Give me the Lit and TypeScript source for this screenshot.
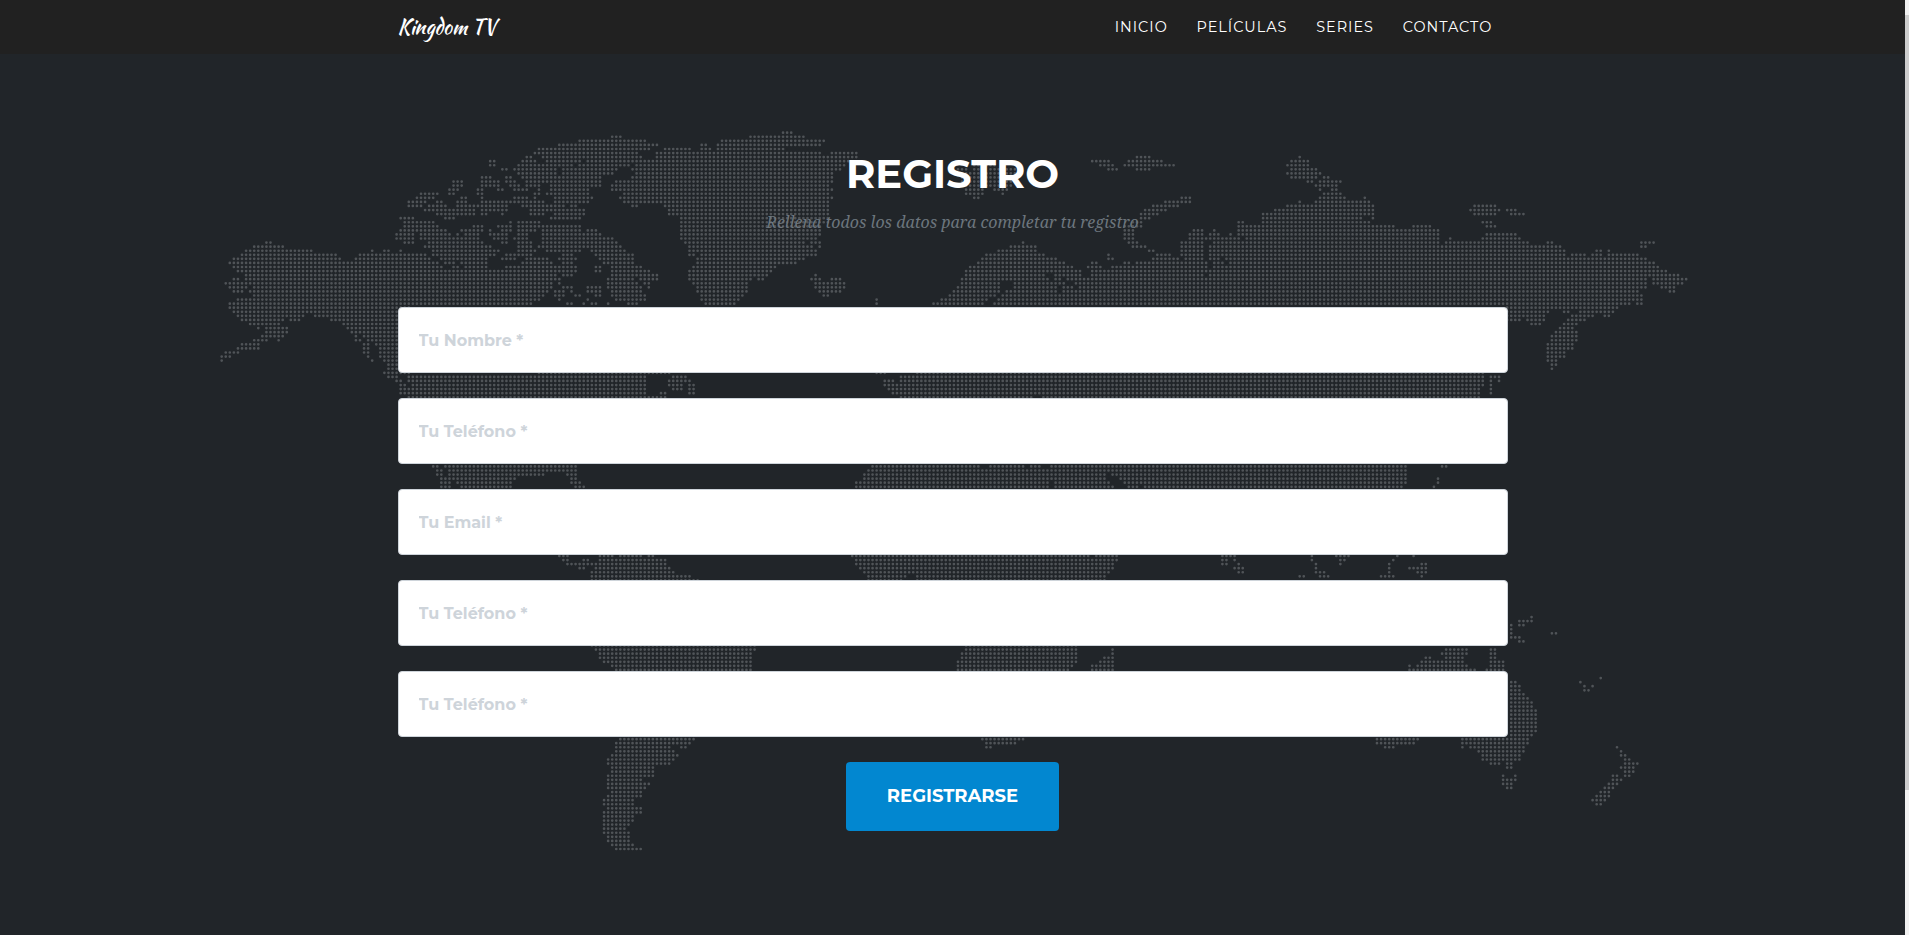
import { LitElement, html, css, svg } from "lit";
import { customElement, property } from "lit/decorators.js";

// Each sheet lists the horizontal runs of land for its rows of dots.
// x is the sheet's left edge, s the units per pixel of its run values.
interface Sheet {
  x: number;
  s: number;
  rows: string;
}

const PITCH = 4.068;
const ROW_PITCH = 4.07;
const LEFT = 217.6;
const TOP = 132.7;

const SHEETS: Sheet[] = [
  {
    x: 210,
    s: 3,
    rows: `1:1207-1231
2:1109-1305
3:1048-1342
4:987-1317
5:975-1280 1340-1440
6:950-963 1000-1290 1340-1440
7:938-980 1012-1109 1134-1317
8:840-852 926-1085 1109-1260
8:840
7:840-852
9:877-889 914-1036 1060-1220
10:926-1036 1060-1207
11:816-840 889-901 938-1036 1048-1170
12:730-755 816-865 889-914 950-1170
13:730-755 816-865 901-926 950-990 1024-1170
14:718-742 804-816 865-877 914-950 987 1024-1134
15:632-682 718-730 804-816 975-987 1012-1134
16:620-670 755-767 816 914-950 975-980 1036-1146
17:596-645 682-694 743-767 816-901 914-1005 1036-1134
18:596-633 657-706 743-804 816-890 938-1060 1085-1100
19:645-730 718-792 816-889 963-1121
20:682-694 706-767 779-792 816-828 877 963-1005 1036-1121
21:572-608 706-730 1024-1109
22:584-670 901 926-987
23:584-682 792-816 865-901 926-987 1000-1109
24:572-706 755-816 840 877-901 926-975 1000-1109 1134-1158
25:560-608 633-718 742 767-804 840-865 877-889 926-950 1000-1170
26:560-608 633-804 852-889 914-950 1000-1207
27:584-608 657-816 877-889 926-963 1000-1220 170-182
28:133-219 645-840 926-963 987-1230
29:109-304 487 523-535 572 670-865 926-975 1012-1109 1146-1245
30:97-377 450-462 475-645 670-853 889-914 926-963 1060-1085 1158-1268
31:72-390 438-657 694-828 877-914 950-1012 1048-1097 1170-1268
32:60-682 706-730 755-767 779-828 938-1024 1060-1085 1182-1268
33:72-694 730-742 767-828 889-1036 1048-1097 1158-1170 1207-1292
34:84-1036 1048-1097 1158-1170 1207-1317
35:109-1036 1060-1085 1207-1342
36:72-84 109-1048 1195-1268 1292-1342
37:48 60-109 121-1024 1048 1195-1280 1305-1317
38:60-109 133-1024 1060-1085 1134-1170 1195-1292 1317
39:72-97 121-1012 1036-1060 1085 1134-1170 1207-1292
40:133-1000 1036-1060 1097-1109 1158-1170 1207-1305
41:84-987 1048 1134 1220-1305
42:60-963 1073-1085 1121 1146-1158 1195 1256-1280
43:60-600
44:72-600
45:84-280 316-600
46:97-219 243-268 365-600
47:121-207 401-600
48:146 170-231 414-600
49:170-231 426-600
50:158-219 438 462-600
51:133-170 207 438-450 475-600
52:97-146 462-475 499-600
53:84-146 462-475 511-600
54:48-84 462-475 511-600
55:36-60 475 511-600
56:36 487 523-600
57:535-600
58:535-600
59:523-600`,
  },
  {
    x: 600,
    s: 3,
    rows: `0:548-573
1:36-61 450-610
2:0-134 365-670
3:0-170 304-316 353-658
4:0-146 194-268 304-328 353-548
5:0-110 170-658 694-768
6:0-110 170-768
7:121-744
8:110-732
9:97-719
10:110-694
11:97-690
12:48-690
13:36-683
14:36-694
15:73-683
16:61-694
17:73-683
18:97-110 194-683
19:207-683
20:207-683
21:243-683
22:243-683
23:243-658
24:243-658
25:243-658
26:243-646
27:256-610 633-658
28:268-633 658
29:268-646
30:268-285 304-646
31:292-610
32:292-585
33:280-525
34:268-512
35:268-500 646
36:268-450 475-487 633-658 694-719
37:280-438 646-732
38:292-438 646-732
39:292-438 658-719
40:304-426 670-682
41:304-414 829
42:316-402 829
8:1121-1134 1158-1180
9:1073-1097 1121-1146 1170-1256
10:1073-1256
11:1085-1243
12:1085-1231
13:1097-1231
14:1097-1146 1182-1219
15:1097-1146 1207
16:1121-1134
27:1268
28:1231-1305
29:1195-1305
30:1158-1330
31:1146-1366
32:1134-1390
33:1109-1415
34:1097-1440
35:1097-1330 1366-1440
36:1085-1342 1366-1378 1402-1440
37:1085-1195 1243-1342 1354-1390 1427-1440
38:1073-1195 1243-1366 1390-1415
39:1060-1195 1219-1366 1390-1440
40:1048-1182 1207-1440
41:1024-1158 1195-1440
42:1000-1146 1182-1440`,
  },
  {
    x: 1080,
    s: 2.529,
    rows: `6:144-176 556
7:30-72 123-207 536-577
8:51-82 113-237 525-577
9:72-93 144-176 536-598
10:525-608
11:536-598 618-628
12:577-587 608-658
13:598-648
14:608 638-648
15:618-658
16:257-278 608-670 720
17:216-278 556 598-730
18:185-247 525-741 998-1050
19:164-216 494-741 988-1060 1081-1101
20:154-195 463-741 998-1050 1091-1122
21:154-175 463-710 741
22:130-150 401-412 463-700 710-731 1019-1040
23:113-154 401-793 845-886 1029-1050
24:113-134 288-308 340 401-906
25:113-134 278-308 329-350 381 401-906 1029-1101
26:113-134 278-319 329-381 391-401 422-906 937 1019-1111
27:123-144 257-308 340-360 370-906 927-1132 1184-1194 1420-1451
28:134-165 257-308 329-1215 1420-1430
29:175-185 257-308 329-1225 1307-1317 1338
30:72 195-226 257-308 329-1225 1246-1276 1297-1317 1338-1410
31:72-82 185-247 267-308 329-350 370-1317 1328-1430
32:30-41 113-123 144-319 340-360 381-1451
33:20-51 82-319 340-1461
34:30-51 61-319 329-1481
35:30-308 329-1512
36:0-1430 1451-1532
37:0-1430 1451-1522
38:0-1430 1471-1502
39:0-1410 1492-1502
40:0-1420
41:0-1420
42:0-1390 1410-1420
43:1081-1360
44:1081-1184 1225-1235 1266-1350
45:1081-1174 1246-1297 1328-1338
46:1081-1111 1132-1174 1235-1276
47:1143-1163 1225-1256
48:1215-1246
49:1205-1256
50:1194-1256
51:1194-1256
52:1184-1246
53:1184-1246
54:1184-1225
55:1184-1225
56:1184-1205
57:1194-1205
58:1194`,
  },
  {
    x: 380,
    s: 3,
    rows: `60:22-50 84-500
61:47-60 84-500
62:60-72 96-500 926-940
63:60 72-500 926-940
64:60-500 926-940
65:84-500
82:157-170 194-587
83:170-182 207-587
84:170-182 207-490 562-587
85:182-207 219-400 575-587
86:182-207 231-390 575-600
87:182-207 243-390 587-612`,
  },
  {
    x: 540,
    s: 1.584,
    rows: `59:0-205 530-548 595-1495
60:0-165 210-232 575-1495 1505-1520
61:0-165 205-235 545-558 570-1495 1507 1518
62:0-165 205-225 547-1492 1507
63:0-165 210-225 550-1490 1507
64:0-165 190-198 562-815 825-1488 1507
65:0-200 570-780 800-1485
82:525-695 712-762 777-793 808-1370 1430-1436
83:520-1370
84:515-895 910-1370
85:515-895 918-1370 1423
86:500-806 815-903 925-1370 1423
87:500-806 815-910 930-948 957-1362 1416
104:30-45 92-115 125-160 170-180 495-870 880-915 1080-1100 1225 1260-1280 1357 1383
105:35-45 68-75 92-195 500-915 1080-1088 1102 1225 1267-1272 1350
106:42-198 500-910 1080-1088 1105 1227 1268 1345 1395-1402
107:62-68 88-205 507-908 1103-1112 1230 1345 1378-1402
108:85-212 513-902 1106-1112 1230-1240 1345 1390-1400
109:85-240 520-580 598-897 1205-1212 1235-1248 1332-1350 1397
110:80-250 520-570 598-897`,
  },
  {
    x: 580,
    s: 2.8,
    rows: `126:32-490 1080-1390
127:43-490 1080-1390 1490
128:55-480 1069-1390 1490
129:55-480 1069-1390 1467-1490
130:66-480 1058-1390 1456-1490
131:89-480 1058-1378 1433-1490
132:100-480 1058-1367 1433-1490
149:112-320 1126-1240 2237-2268
150:100-308 1137-1220 2237-2268
151:100-250 285-297 1137-1149 2250-2268
152:100-262
153:89-275
154:78-262
155:78-250
156:89-208
157:89-208
158:78-208
159:78-172
160:78-195
161:78-185
162:89-172
163:78-172
164:66-150
165:66-150
166:78-172
167:66-172
168:66-150
169:66-150
170:66-138
171:66-127
172:66-138
173:78-138
174:78-138
175:89-150
176:100-172`,
  },
  {
    x: 1390,
    s: 3,
    rows: `119:425
120:388-425
121:364 388-401
122:364
123:364 487-499
124:364-390
125:388-401
127:168-231 303-316
128:156-231 303-316
129:107-120 168-219 303-316
130:95-219 303-340
131:58 82-231 303-340
132:58-70 82-255 291-340
134:632
135:364-376 572
136:364-388 584 608
137:364-388 584-596
138:364-401
139:364-413
140:364-425
141:364-425
142:364-437
143:364-437
144:364-437
145:364-437
146:364-437
147:364-437
148:364-425
149:0-82 219-413
150:0-70 219-231 243-413
151:0-10 219 243-401 681
152:268-401 693
153:280-390 693-705
154:280-388 705-718
155:303-328 352-364 705-742
156:352-364 693-730
157:705-730
158:340 376 669-681 705-718
159:340-376 669-693
160:340-364 657-681
161:352-364 645-669
162:632-657
163:620-657
164:608-645
165:620-632`,
  },
];

const toColumn = (v: number, sheet: Sheet) =>
  Math.round((v / sheet.s + sheet.x - LEFT) / PITCH);

function dotPath(): string {
  const seen = new Set<number>();
  let d = "";
  for (const sheet of SHEETS) {
    for (const line of sheet.rows.split("\n")) {
      const [index, runs] = line.split(":");
      const row = Number(index);
      for (const run of runs.split(" ")) {
        const [a, b] = run.split("-").map(Number);
        const end = toColumn(b ?? a, sheet);
        for (let col = toColumn(a, sheet); col <= end; col++) {
          const key = row * 1000 + col;
          if (seen.has(key)) continue;
          seen.add(key);
          d += `M${(LEFT + col * PITCH).toFixed(2)} ${(TOP + row * ROW_PITCH).toFixed(2)}h.01`;
        }
      }
    }
  }
  return d;
}

@customElement("world-map")
class WorldMap extends LitElement {
  static styles = css`
    :host {
      display: block;
    }
    .map {
      display: block;
      width: 1905px;
      height: 935px;
    }
    .dots {
      fill: none;
      stroke: #505458;
      stroke-width: 2.7;
      stroke-linecap: round;
    }
  `;
  render() {
    return html`<svg class="map" viewBox="0 0 1905 935" aria-hidden="true">
      ${svg`<path class="dots" d=${dotPath()}></path>`}
    </svg>`;
  }
}

@customElement("site-nav")
class SiteNav extends LitElement {
  @property({ type: Array }) links: string[] = [];
  static styles = css`
    :host {
      display: block;
      background: #212121;
      height: 54px;
    }
    .inner {
      width: 1110px;
      height: 54px;
      margin: 0 auto;
      display: flex;
      justify-content: space-between;
      align-items: center;
    }
    .brand {
      font: 400 20px/30px "Kaushan Script", "Lato", sans-serif;
      color: #fff;
      text-decoration: none;
    }
    .links {
      display: flex;
      gap: 28.8px;
      margin: 0;
      padding: 0 15.2px 0 0;
      list-style: none;
    }
    .link {
      display: block;
      font: 400 14.4px/22px "Montserrat", "Inter", sans-serif;
      letter-spacing: 1px;
      color: #fff;
      text-decoration: none;
    }
  `;
  render() {
    return html`<nav class="inner">
      <a class="brand" href="#">Kingdom TV</a>
      <ul class="links">
        ${this.links.map((l) => html`<li><a class="link" href="#">${l}</a></li>`)}
      </ul>
    </nav>`;
  }
}

@customElement("app-root")
class AppRoot extends LitElement {
  static styles = css`
    :host {
      display: grid;
      grid-template-columns: 1fr 4px;
      height: 935px;
      overflow: hidden;
      background: #212529;
    }
    .page {
      position: relative;
      height: 935px;
    }
    .backdrop {
      position: absolute;
      inset: 0;
    }
    .content {
      position: relative;
      display: flex;
      flex-direction: column;
      height: 935px;
    }
    .section {
      width: 1110px;
      margin: 0 auto;
      padding-top: 96px;
      display: flex;
      flex-direction: column;
      align-items: center;
    }
    .title {
      margin: 0;
      font: 700 40px/48px "Montserrat", "Inter", sans-serif;
      color: #fff;
    }
    .subtitle {
      margin: 12px 0 0;
      font: italic 400 16px/24px "Droid Serif", "Noto Serif", "Liberation Serif", serif;
      color: #6c757d;
    }
    .form {
      width: 100%;
      margin-top: 73px;
      display: flex;
      flex-direction: column;
      align-items: center;
      gap: 25px;
    }
    .field {
      box-sizing: border-box;
      width: 100%;
      height: 66px;
      padding: 20px;
      border: 1px solid #ced4da;
      border-radius: 4px;
      background: #fff;
      font: 700 16px/24px "Montserrat", "Inter", sans-serif;
    }
    .field::placeholder {
      color: #ced4da;
      opacity: 1;
    }
    .submit {
      width: 213px;
      height: 69px;
      padding: 0;
      border: 0;
      border-radius: 4px;
      background: #0287d0;
      color: #fff;
      font: 700 18px/27px "Montserrat", "Inter", sans-serif;
    }
    .scrollbar {
      background: #f1f1f1;
      padding-top: 15px;
    }
    .thumb {
      height: 775px;
      background: #cdcdcd;
    }
  `;
  render() {
    const fields = ["Tu Nombre *", "Tu Teléfono *", "Tu Email *", "Tu Teléfono *", "Tu Teléfono *"];
    return html`
      <div class="page">
        <world-map class="backdrop"></world-map>
        <div class="content">
          <site-nav .links=${["INICIO", "PELÍCULAS", "SERIES", "CONTACTO"]}></site-nav>
          <section class="section">
            <h2 class="title">REGISTRO</h2>
            <p class="subtitle">Rellena todos los datos para completar tu registro</p>
            <form class="form">
              ${fields.map((f) => html`<input class="field" placeholder=${f} />`)}
              <button class="submit" type="button">REGISTRARSE</button>
            </form>
          </section>
        </div>
      </div>
      <div class="scrollbar"><div class="thumb"></div></div>
    `;
  }
}
